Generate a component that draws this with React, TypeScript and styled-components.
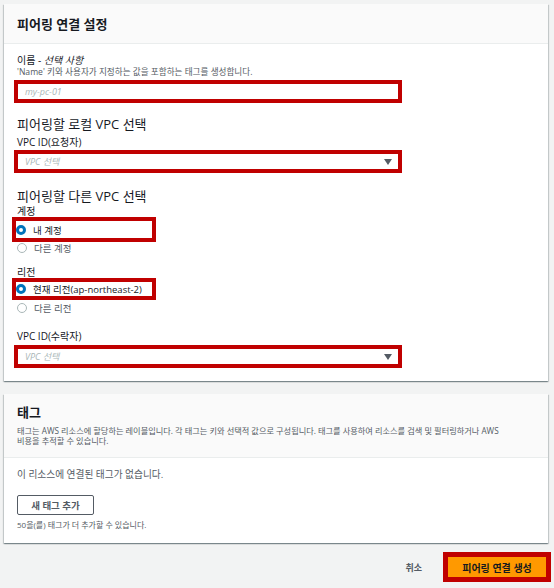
import React from "react";
import styled, { createGlobalStyle } from "styled-components";

const GlobalStyle = createGlobalStyle`
  html, body { margin: 0; padding: 0; background: #f2f3f3; }
  body { font-family: "Open Sans", "Noto Sans CJK KR", sans-serif; color: #16191f; }
`;

const Page = styled.div`
  display: flex;
  flex-direction: column;
  padding: 4px 6px 0 4px;
  width: 554px;
  box-sizing: border-box;
`;

const Card = styled.section<{ $gap?: number }>`
  background: #ffffff;
  margin-top: ${(p) => p.$gap ?? 0}px;
  box-shadow: 0 1px 1px 0 rgba(0, 28, 36, 0.3), 1px 1px 1px 0 rgba(0, 28, 36, 0.15),
    -1px 1px 1px 0 rgba(0, 28, 36, 0.15);
`;

const CardHeader = styled.header<{ $pt: number; $pb: number }>`
  background: #fafafa;
  border-bottom: 1px solid #eaeded;
  padding: ${(p) => p.$pt}px 13px ${(p) => p.$pb}px 13px;
`;

const CardTitle = styled.h2<{ $lh: number }>`
  margin: 0;
  font-size: 13px;
  font-weight: 700;
  line-height: ${(p) => p.$lh}px;
  color: #16191f;
`;

const HeaderDesc = styled.p`
  margin: 6px 0 0;
  font-size: 8.2px;
  line-height: 10px;
  color: #545b64;
`;

const CardBody = styled.div<{ $pt: number; $pb: number }>`
  display: flex;
  flex-direction: column;
  align-items: flex-start;
  padding: ${(p) => p.$pt}px 13px ${(p) => p.$pb}px 13px;
`;

const Label = styled.div<{ $mt?: number; $lh?: number }>`
  margin-top: ${(p) => p.$mt ?? 0}px;
  font-size: 10px;
  line-height: ${(p) => p.$lh ?? 14}px;
  color: #16191f;
`;

const Optional = styled.i`
  font-style: italic;
`;

const Hint = styled.div`
  font-size: 8.6px;
  line-height: 10px;
  color: #545b64;
`;

const SectionTitle = styled.h3<{ $mt: number }>`
  margin: ${(p) => p.$mt}px 0 0;
  font-size: 13px;
  font-weight: 400;
  line-height: 18px;
  color: #16191f;
`;

const Mark = styled.div<{ $mt: number; $w: number; $shift: number }>`
  margin-top: ${(p) => p.$mt}px;
  margin-left: -${(p) => p.$shift}px;
  width: ${(p) => p.$w}px;
  border: 4px solid #c00000;
  box-sizing: border-box;
  background: #ffffff;
`;

const Field = styled.div`
  display: flex;
  align-items: center;
  justify-content: space-between;
  height: 15px;
  padding: 0 6px 0 7px;
`;

const Placeholder = styled.span`
  font-size: 9px;
  font-style: italic;
  color: #aab7b8;
`;

const Caret = styled.span`
  width: 0;
  height: 0;
  border-left: 4px solid transparent;
  border-right: 4px solid transparent;
  border-top: 6px solid #545b64;
`;

const RadioRow = styled.label<{ $h: number; $mt?: number; $muted?: boolean }>`
  display: flex;
  align-items: center;
  gap: 7px;
  height: ${(p) => p.$h}px;
  margin-top: ${(p) => p.$mt ?? 0}px;
  font-size: 9.5px;
  color: ${(p) => (p.$muted ? "#545b64" : "#16191f")};
`;

const RadioDot = styled.span<{ $on?: boolean }>`
  width: 10px;
  height: 10px;
  border-radius: 50%;
  box-sizing: border-box;
  background: #ffffff;
  border: ${(p) => (p.$on ? "3px solid #0073bb" : "1px solid #aab7b8")};
  flex: none;
`;

const BodyText = styled.div`
  font-size: 9.7px;
  line-height: 14px;
  color: #545b64;
`;

const SecondaryButton = styled.button`
  margin-top: 13px;
  height: 20px;
  width: 77px;
  border: 1px solid #545b64;
  border-radius: 2px;
  background: #ffffff;
  font-family: inherit;
  font-size: 9.5px;
  font-weight: 700;
  color: #545b64;
  padding: 0;
`;

const SmallNote = styled.div`
  margin-top: 5px;
  font-size: 8px;
  line-height: 10px;
  color: #545b64;
`;

const Footer = styled.div`
  display: flex;
  justify-content: flex-end;
  align-items: center;
  gap: 21px;
  margin-top: 9px;
  margin-right: -3px;
`;

const LinkButton = styled.button`
  border: none;
  background: none;
  padding: 0;
  font-family: inherit;
  font-size: 9px;
  font-weight: 700;
  color: #545b64;
`;

const PrimaryMark = styled.div`
  border: 5px solid #c00000;
`;

const PrimaryButton = styled.button`
  display: block;
  width: 98px;
  height: 20px;
  border: none;
  background: #ff9900;
  padding: 0;
  font-family: inherit;
  font-size: 10px;
  font-weight: 700;
  color: #16191f;
`;

export default function App() {
  return (
    <>
      <GlobalStyle />
      <Page>
        <Card>
          <CardHeader $pt={11} $pb={10}>
            <CardTitle $lh={18}>피어링 연결 설정</CardTitle>
          </CardHeader>
          <CardBody $pt={9} $pb={13}>
            <Label>
              이름 - <Optional>선택 사항</Optional>
            </Label>
            <Hint>'Name' 키와 사용자가 지정하는 값을 포함하는 태그를 생성합니다.</Hint>
            <Mark $mt={3} $w={388} $shift={3}>
              <Field>
                <Placeholder>my-pc-01</Placeholder>
              </Field>
            </Mark>

            <SectionTitle $mt={12}>피어링할 로컬 VPC 선택</SectionTitle>
            <Label $mt={2}>VPC ID(요청자)</Label>
            <Mark $mt={1} $w={388} $shift={3}>
              <Field>
                <Placeholder>VPC 선택</Placeholder>
                <Caret />
              </Field>
            </Mark>

            <SectionTitle $mt={14}>피어링할 다른 VPC 선택</SectionTitle>
            <Label $lh={12}>계정</Label>
            <Mark $mt={0} $w={144} $shift={5}>
              <RadioRow $h={17}>
                <RadioDot $on />
                내 계정
              </RadioRow>
            </Mark>
            <RadioRow $h={12} $muted>
              <RadioDot />
              다른 계정
            </RadioRow>

            <Label $mt={12} $lh={12}>리전</Label>
            <Mark $mt={0} $w={144} $shift={5}>
              <RadioRow $h={14}>
                <RadioDot $on />
                현재 리전(ap-northeast-2)
              </RadioRow>
            </Mark>
            <RadioRow $h={14} $mt={1} $muted>
              <RadioDot />
              다른 리전
            </RadioRow>

            <Label $mt={14}>VPC ID(수락자)</Label>
            <Mark $mt={2} $w={388} $shift={3}>
              <Field>
                <Placeholder>VPC 선택</Placeholder>
                <Caret />
              </Field>
            </Mark>
          </CardBody>
        </Card>

        <Card $gap={13}>
          <CardHeader $pt={10} $pb={11}>
            <CardTitle $lh={16}>태그</CardTitle>
            <HeaderDesc>
              태그는 AWS 리소스에 할당하는 레이블입니다. 각 태그는 키와 선택적 값으로 구성됩니다. 태그를 사용하여 리소스를 검색 및 필터링하거나 AWS
              <br />
              비용을 추적할 수 있습니다.
            </HeaderDesc>
          </CardHeader>
          <CardBody $pt={10} $pb={13}>
            <BodyText>이 리소스에 연결된 태그가 없습니다.</BodyText>
            <SecondaryButton>새 태그 추가</SecondaryButton>
            <SmallNote>50을(를) 태그가 더 추가할 수 있습니다.</SmallNote>
          </CardBody>
        </Card>

        <Footer>
          <LinkButton>취소</LinkButton>
          <PrimaryMark>
            <PrimaryButton>피어링 연결 생성</PrimaryButton>
          </PrimaryMark>
        </Footer>
      </Page>
    </>
  );
}
